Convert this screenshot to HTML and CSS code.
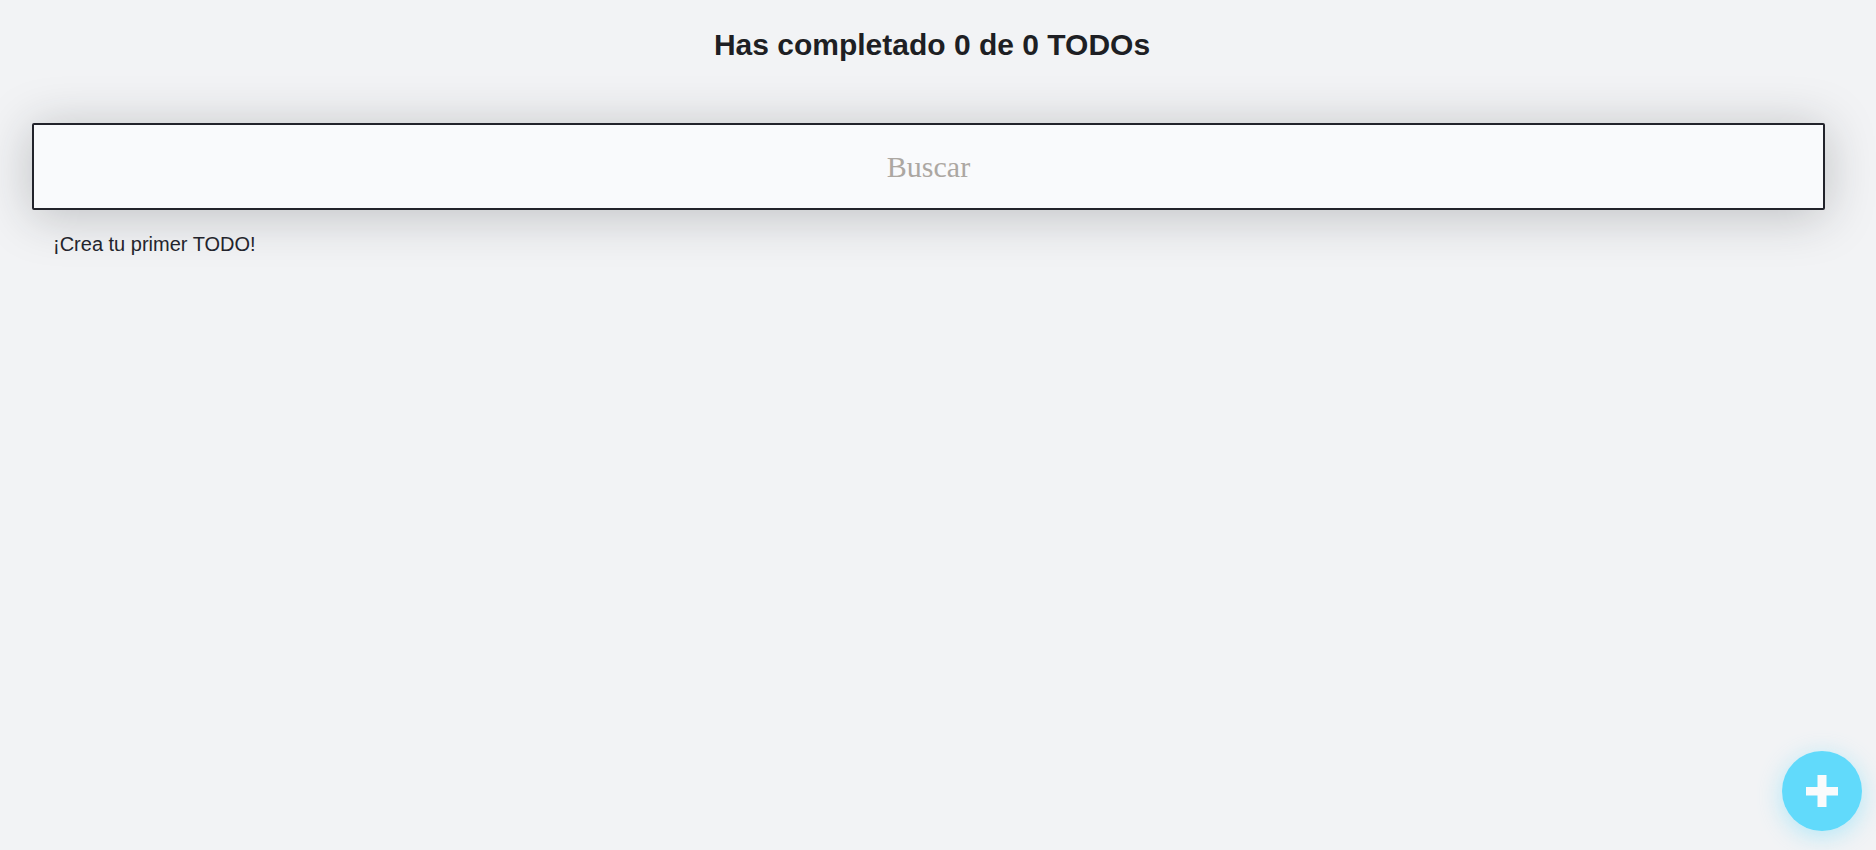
FILE: index.html
```html
<!DOCTYPE html>
<html lang="es">
<head>
<meta charset="utf-8">
<title>TODOs</title>
<link rel="stylesheet" href="styles.css">
</head>
<body>
<main class="app">
  <h1 class="counter">Has completado 0 de 0 TODOs</h1>
  <input class="search" type="text" placeholder="Buscar">
  <ul class="list">
    <li class="empty">¡Crea tu primer TODO!</li>
  </ul>
</main>
<button class="create-btn" type="button" aria-label="Crear TODO">
  <svg width="32" height="32" viewBox="0 0 32 32" aria-hidden="true">
    <rect x="0" y="12" width="32" height="8.5" fill="#fafbfc"/>
    <rect x="11.5" y="0" width="9" height="32" fill="#fafbfc"/>
  </svg>
</button>
</body>
</html>
```
FILE: styles.css
```css
* { box-sizing: border-box; }

html {
  background: #f2f3f5;
}

body {
  margin: 0;
  padding: 0;
  min-height: 100vh;
  font-family: "Liberation Sans", Arial, sans-serif;
  color: #1e1f24;
}

.app {
  padding-top: 28px;
}

.counter {
  margin: 0;
  padding-right: 12px;
  font-size: 30px;
  line-height: 34px;
  font-weight: bold;
  text-align: center;
  color: #1e1f24;
}

.search {
  display: block;
  margin: 61px 0 0 32px;
  width: calc(100% - 83px);
  height: 87px;
  border: 2px solid #22232b;
  border-radius: 2px;
  background: #f9fafc;
  font-family: "Liberation Serif", "Times New Roman", serif;
  font-size: 30px;
  text-align: center;
  color: #1e1f24;
  box-shadow: 0 5px 50px rgba(32, 35, 41, 0.25);
  outline: none;
}

.search::placeholder {
  color: #aca7a2;
}

.list {
  list-style: none;
  margin: 23px 0 0 0;
  padding: 0 0 0 53px;
}

.empty {
  font-size: 20px;
  line-height: 23px;
  color: #23242c;
}

.create-btn {
  position: fixed;
  right: 14px;
  bottom: 19px;
  width: 80px;
  height: 80px;
  border: none;
  border-radius: 50%;
  background: #61dafb;
  box-shadow: 0 5px 25px rgba(97, 218, 251, 0.45);
  display: flex;
  align-items: center;
  justify-content: center;
  padding: 0;
  cursor: pointer;
}

.create-btn svg {
  display: block;
}
```
